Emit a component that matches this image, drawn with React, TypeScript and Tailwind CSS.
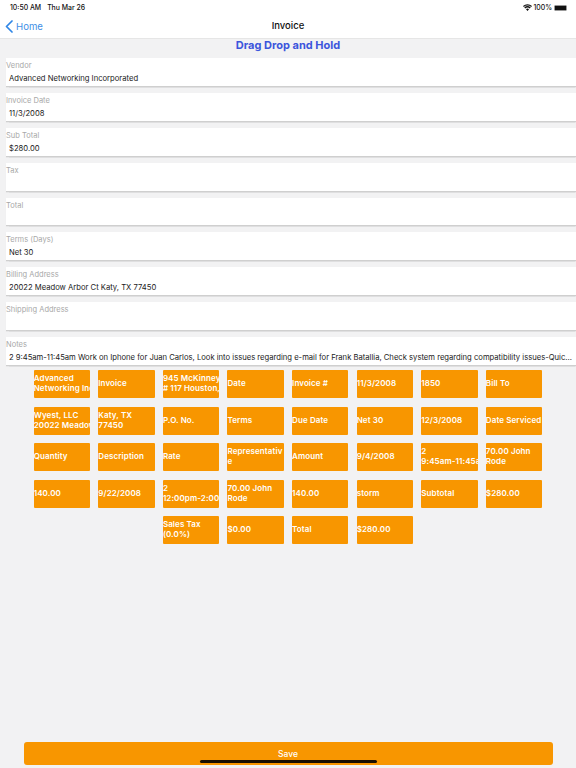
const fields: [string, string][] = [
  ["Vendor", "Advanced Networking Incorporated"],
  ["Invoice Date", "11/3/2008"],
  ["Sub Total", "$280.00"],
  ["Tax", ""],
  ["Total", ""],
  ["Terms (Days)", "Net 30"],
  ["Billing Address", "20022 Meadow Arbor Ct Katy, TX 77450"],
  ["Shipping Address", ""],
  ["Notes", "2 9:45am-11:45am Work on Iphone for Juan Carlos, Look into issues regarding e-mail for Frank Batallia, Check system regarding compatibility issues-Quic..."],
];

const tiles: string[][] = [
  ["Advanced", "Networking Inc"], ["Invoice"], ["945 McKinney", "# 117 Houston,"], ["Date"], ["Invoice #"], ["11/3/2008"], ["1850"], ["Bill To"],
  ["Wyest, LLC", "20022 Meadow"], ["Katy, TX", "77450"], ["P.O. No."], ["Terms"], ["Due Date"], ["Net 30"], ["12/3/2008"], ["Date Serviced"],
  ["Quantity"], ["Description"], ["Rate"], ["Representativ", "e"], ["Amount"], ["9/4/2008"], ["2", "9:45am-11:45a"], ["70.00 John", "Rode"],
  ["140.00"], ["9/22/2008"], ["2", "12:00pm-2:00"], ["70.00 John", "Rode"], ["140.00"], ["storm"], ["Subtotal"], ["$280.00"],
];
const lastRow: string[][] = [["Sales Tax", "(0.0%)"], ["$0.00"], ["Total"], ["$280.00"]];

function Tile({ lines }: { lines: string[] }) {
  return (
    <div className="h-[28px] flex flex-col justify-center overflow-hidden bg-[#f89600] rounded-[1px] text-white text-[8px] leading-[9.700px] font-semibold tracking-[0.1px] whitespace-nowrap">
      {lines.map((l, i) => (
        <span key={i} className="block">
          {l}
        </span>
      ))}
    </div>
  );
}

export default function App() {
  return (
    <div className="relative min-h-[768px] flex flex-col bg-[#f2f2f3] font-['Inter','Liberation_Sans',sans-serif] text-[#111]">
      <div className="bg-white h-[38px] flex flex-col">
        <div className="h-[14px] pt-[2px] pl-[10px] pr-[9px] flex items-center justify-between text-[6.900px] font-medium">
          <div className="flex gap-[6px]">
            <span>10:50 AM</span>
            <span>Thu Mar 26</span>
          </div>
          <div className="flex items-center gap-[1px]">
            <svg width="9" height="7" viewBox="0 0 18 14" fill="#111">
              <path d="M9 14 6 10.6a4.4 4.4 0 0 1 6 0ZM4.4 8.9 2.6 7a9.400 9.400 0 0 1 12.800 0l-1.800 1.900a6.800 6.800 0 0 0-9.200 0ZM1.700 5.900 0 4a13.300 13.300 0 0 1 18 0l-1.700 1.900a10.800 10.800 0 0 0-14.600 0Z" />
            </svg>
            <span>100%</span>
            <div className="ml-[1px] w-[13px] h-[6px] rounded-[1.500px] bg-[#111] border border-[#999]" />
          </div>
        </div>
        <div className="relative flex-1 flex items-center justify-center pt-[1px]">
          <div className="absolute left-[5px] top-[5.500px] flex items-center gap-[3px] text-[#3f8fe6] text-[9.600px]">
            <svg width="8" height="13" viewBox="0 0 8 13" fill="none" stroke="#2f86e6" strokeWidth="1.700" strokeLinecap="round" strokeLinejoin="round">
              <path d="M7 1 1.500 6.500 7 12" />
            </svg>
            <span>Home</span>
          </div>
          <span className="text-[9.500px] font-medium">Invoice</span>
        </div>
      </div>

      <div className="h-[20px] flex justify-center text-[#3c55dc] text-[11px] leading-[13px] font-bold border-t border-[#e6e6e6]">
        Drag Drop and Hold
      </div>

      <div className="flex flex-col gap-[6px] pl-[6px]">
        {fields.map(([label, value]) => (
          <div key={label} className="h-[28.900px] bg-white border-b border-[#cfcfcf] shadow-[0_0.5px_1px_rgba(0,0,0,0.08)] flex flex-col">
            <div className="h-[15px] pt-[2px] text-[#a8a8a8] text-[7.500px] leading-[12px]">{label}</div>
            <div className="pl-[3px] text-[#1a1a1a] text-[7.650px] leading-[12px] whitespace-nowrap">
              {value}
            </div>
          </div>
        ))}
      </div>

      <div className="mt-[4px] ml-[33.700px] w-[508.600px] grid grid-cols-8 gap-x-[8.200px] gap-y-[8.500px]">
        {tiles.map((t, i) => (
          <Tile key={i} lines={t} />
        ))}
        <div className="col-start-3">
          <Tile lines={lastRow[0]} />
        </div>
        {lastRow.slice(1).map((t, i) => (
          <Tile key={i} lines={t} />
        ))}
      </div>

      <div className="mt-auto mb-[3px] mx-[23.500px] h-[23px] bg-[#f89600] rounded-[3px] flex items-center justify-center text-white text-[8.500px] font-medium pt-[2px]">
        Save
      </div>
      <div className="absolute left-[200px] top-[760px] w-[177px] h-[3px] rounded-full bg-[#1a0f00]" />
    </div>
  );
}
